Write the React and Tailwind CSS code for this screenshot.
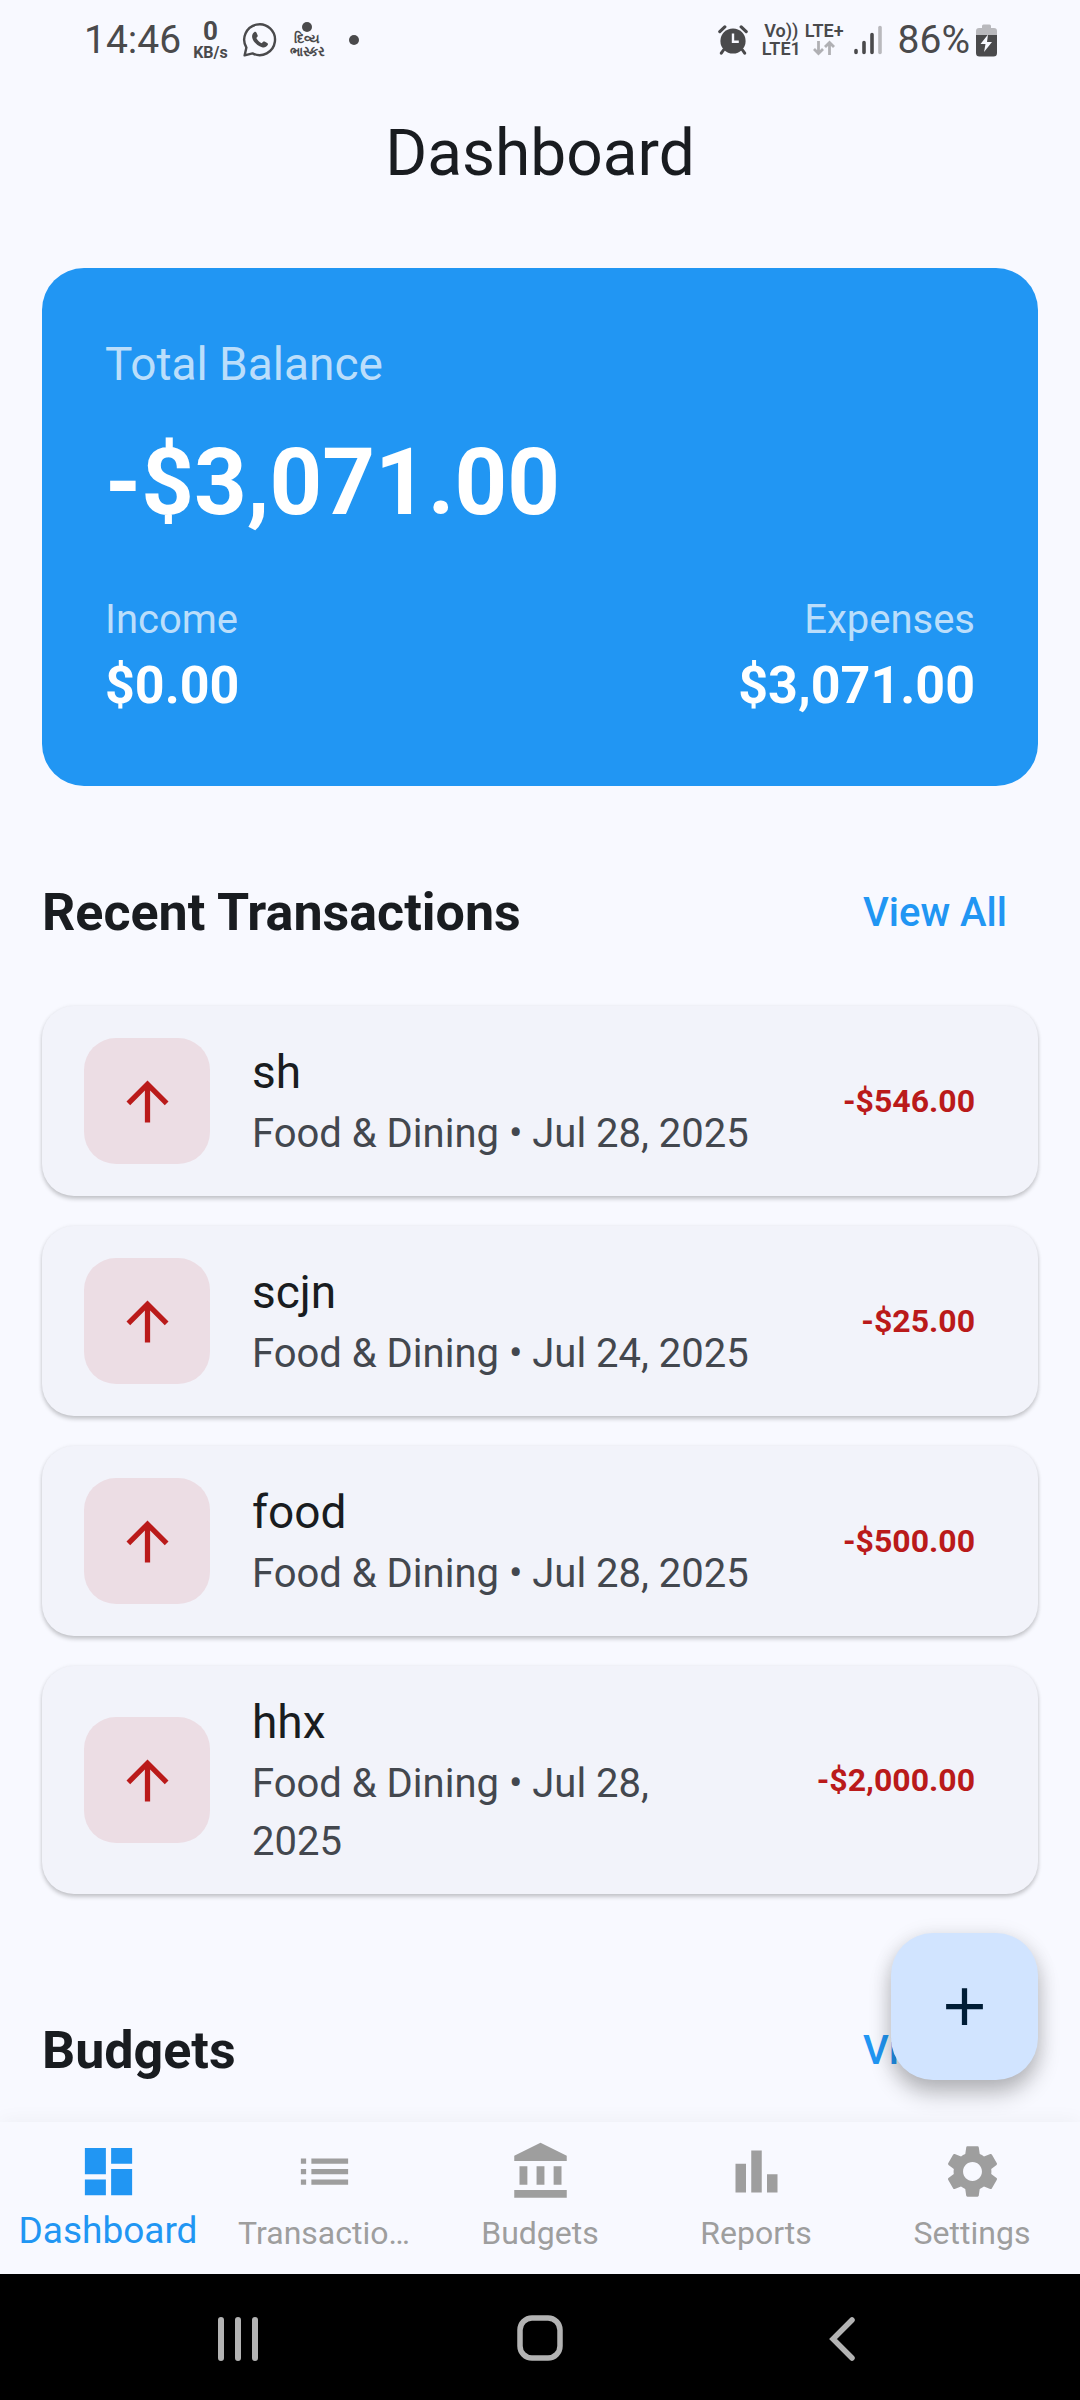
import React from "react";
import {
  MdDashboard,
  MdList,
  MdAccountBalance,
  MdBarChart,
  MdSettings,
  MdArrowUpward,
  MdAdd,
} from "react-icons/md";

const transactions = [
  { title: "sh", detail: "Food & Dining • Jul 28, 2025", amount: "-$546.00" },
  { title: "scjn", detail: "Food & Dining • Jul 24, 2025", amount: "-$25.00" },
  { title: "food", detail: "Food & Dining • Jul 28, 2025", amount: "-$500.00" },
  { title: "hhx", detail: "Food & Dining • Jul 28, 2025", amount: "-$2,000.00" },
];

const tabs = [
  { name: "Dashboard", label: "Dashboard", Icon: MdDashboard, active: true },
  { name: "Transactions", label: "Transactio…", Icon: MdList },
  { name: "Budgets", label: "Budgets", Icon: MdAccountBalance },
  { name: "Reports", label: "Reports", Icon: MdBarChart },
  { name: "Settings", label: "Settings", Icon: MdSettings },
];

function WhatsAppIcon() {
  return (
    <svg viewBox="0 0 36 36" className="size-9" fill="none" aria-label="WhatsApp">
      <path
        d="M2.6 33.4 4.4 25.6A15.4 15.4 0 1 1 10.6 31.4Z"
        stroke="#4a4a4c"
        strokeWidth="2.4"
        strokeLinejoin="round"
      />
      <path
        d="M12.2 10.2c.8-.6 1.9-.4 2.3.5l1.1 2.6c.3.7.1 1.3-.4 1.8l-.9 1c1.1 2.2 2.9 4 5.3 5.1l1.3-1.3c.5-.5 1.1-.6 1.7-.3l2.6 1.3c.8.4 1 1.3.5 2.1-1.2 2-3.4 2.9-5.7 2.2-4.7-1.5-8.4-4.9-9.7-9.3-.6-2.2.1-4.5 1.900-5.700Z"
        fill="#4a4a4c"
      />
    </svg>
  );
}

function AlarmIcon() {
  return (
    <svg viewBox="0 0 30 30" className="size-[30px]" fill="none" aria-label="Alarm">
      <circle cx="15" cy="16" r="12.6" fill="#4a4a4c" />
      <path d="M1.8 6.6 6.8 1.9M28.2 6.6 23.2 1.9" stroke="#4a4a4c" strokeWidth="3.2" strokeLinecap="round" />
      <path d="M5.5 25 3.3 28.2M24.5 25l2.2 3.2" stroke="#4a4a4c" strokeWidth="3" strokeLinecap="round" />
      <path d="M15 8.5V16.8h5.8" stroke="#f8f9ff" strokeWidth="2.4" />
    </svg>
  );
}

function SignalIcon() {
  return (
    <svg viewBox="0 0 28 30" className="h-[30px] w-7" strokeWidth="3.6" strokeLinecap="round" stroke="#4a4a4c" aria-label="Signal">
      <path d="M2 25.5v2M10 17.5v10M18 9.5v18" />
      <path d="M26 2.5v25" stroke="#b9b9bd" />
    </svg>
  );
}

function BatteryIcon() {
  return (
    <svg viewBox="0 0 21 33" className="h-[33px] w-[21px]" aria-label="Battery charging">
      <path d="M6 4V2a1.5 1.5 0 0 1 1.5-1.5h6A1.5 1.5 0 0 1 15 2v2h3a3 3 0 0 1 3 3v5H0V7a3 3 0 0 1 3-3Z" fill="#b9b9bd" />
      <path d="M0 11h21v18a3.5 3.5 0 0 1-3.5 3.5h-14A3.5 3.5 0 0 1 0 29Z" fill="#4a4a4c" />
      <path d="M12 10.5 4.5 20h5L8 28l8-10h-5Z" fill="#f8f9ff" />
    </svg>
  );
}

function StatusBar() {
  return (
    <div className="flex h-20 items-center justify-between pr-[83px] pl-[84px] text-[#4a4a4c]">
      <div className="flex items-center">
        <span className="text-[39px] leading-10">14:46</span>
        <span className="ml-3 flex flex-col items-center font-bold">
          <span className="text-[26px] leading-[26px]">0</span>
          <span className="text-base leading-[18px]">KB/s</span>
        </span>
        <span className="ml-3.5">
          <WhatsAppIcon />
        </span>
        <span className="ml-3 flex flex-col items-center text-[13px] leading-[13px] font-bold">
          <span className="size-2.5 rounded-full bg-[#4a4a4c]" />
          <span>દિવ્ય</span>
          <span>ભાસ્કર</span>
        </span>
        <span className="ml-6 size-2.5 rounded-full bg-[#4a4a4c]" />
      </div>
      <div className="flex items-center">
        <AlarmIcon />
        <div className="ml-3.5 grid grid-cols-[auto_auto] justify-items-center gap-x-1 text-[18px] leading-[18px] font-semibold">
          <span>Vo))</span>
          <span>LTE+</span>
          <span>LTE1</span>
          <svg viewBox="0 0 24 16" className="h-4 w-6" fill="none" stroke="#b0b0b4" strokeWidth="2.8" aria-label="Data">
            <path d="M6.5 1v12M2 9l4.5 4.5L11 9M17.5 15V3M13 7l4.5-4.5L22 7" />
          </svg>
        </div>
        <span className="ml-2.5">
          <SignalIcon />
        </span>
        <span className="ml-4 text-[39px] leading-10">86%</span>
        <span className="ml-1.5">
          <BatteryIcon />
        </span>
      </div>
    </div>
  );
}

function BalanceCard() {
  return (
    <section className="rounded-[42px] bg-[#2196f3] p-[63px] text-white">
      <p className="text-[46px] leading-[66px] text-[#bbdefb]">Total Balance</p>
      <p className="mt-5 text-[92px] leading-[132px] font-bold">-$3,071.00</p>
      <div className="mt-[42px] flex justify-between">
        <div>
          <p className="text-[40px] leading-[58px] text-[#bbdefb]">Income</p>
          <p className="text-[52px] leading-[74px] font-bold">$0.00</p>
        </div>
        <div className="text-right">
          <p className="text-[40px] leading-[58px] text-[#bbdefb]">Expenses</p>
          <p className="text-[52px] leading-[74px] font-bold">$3,071.00</p>
        </div>
      </div>
    </section>
  );
}

function SectionHeader({ title }) {
  return (
    <div className="mt-16 flex h-[126px] items-center justify-between">
      <h2 className="text-[52px] leading-[74px] font-bold">{title}</h2>
      <button type="button" className="px-[31px] text-[40px] leading-[58px] font-medium text-[#2196f3]">
        View All
      </button>
    </div>
  );
}

function TransactionCard({ title, detail, amount }) {
  return (
    <li className="flex min-h-[190px] items-center rounded-[32px] bg-[#f2f3fa] py-[23px] pr-[63px] pl-[42px] shadow-[0_3px_4px_rgba(0,0,0,0.2),0_0_4px_rgba(0,0,0,0.06)]">
      <div className="flex size-[126px] shrink-0 items-center justify-center rounded-[32px] bg-[#ecdde4] text-[#ba1a1a]">
        <MdArrowUpward className="size-[63px]" />
      </div>
      <div className="ml-[42px] min-w-0 flex-1">
        <p className="text-[46px] leading-[66px]">{title}</p>
        <p className="text-[40px] leading-[58px] text-[#43474e]">{detail}</p>
      </div>
      <p className="ml-20 text-[32px] leading-[46px] font-bold text-[#ba1a1a]">{amount}</p>
    </li>
  );
}

function BottomNav() {
  return (
    <nav className="grid h-[152px] grid-cols-5 bg-[#f8f9ff] shadow-[0_0_20px_rgba(0,0,0,0.05)]">
      {tabs.map(({ name, label, Icon, active }) => (
        <button
          key={name}
          type="button"
          aria-label={name}
          className={
            active
              ? "flex min-w-0 flex-col items-center pt-[18px] text-[#2196f3]"
              : "flex min-w-0 flex-col items-center pt-[18px] text-[#9e9e9e]"
          }
        >
          <Icon className="size-[63px] shrink-0" />
          <span className={active ? "text-[37px] leading-[56px]" : "mt-1.5 text-[32px] leading-[48px]"}>
            {label}
          </span>
        </button>
      ))}
    </nav>
  );
}

function SystemNav() {
  return (
    <div className="grid h-[126px] grid-cols-3 bg-black px-[87px]">
      <button type="button" aria-label="Recents" className="flex items-center justify-center">
        <svg viewBox="0 0 48 48" className="size-12" stroke="#b3b3b3" strokeWidth="6" strokeLinecap="round">
          <path d="M7 7v38M24 7v38M41 7v38" />
        </svg>
      </button>
      <button type="button" aria-label="Home" className="flex items-center justify-center">
        <svg viewBox="0 0 48 48" className="size-12" fill="none" stroke="#b3b3b3" strokeWidth="5.5">
          <rect x="4" y="5" width="40" height="40" rx="12" />
        </svg>
      </button>
      <button type="button" aria-label="Back" className="flex items-center justify-center">
        <svg viewBox="0 0 48 48" className="size-12" fill="none" stroke="#b3b3b3" strokeWidth="5.5" strokeLinecap="round">
          <path d="M34 7 15 26l19 19" />
        </svg>
      </button>
    </div>
  );
}

export default function App() {
  return (
    <div className="flex min-h-screen flex-col bg-[#f8f9ff] font-['Roboto',sans-serif] text-[#191c20]">
      <StatusBar />
      <header className="flex h-[147px] items-center justify-center">
        <h1 className="text-[64px] leading-[80px]">Dashboard</h1>
      </header>
      <main className="flex-1 px-[42px] pt-[41px]">
        <BalanceCard />
        <SectionHeader title="Recent Transactions" />
        <ul className="mt-[30px] mb-[94px] flex flex-col gap-[30px]">
          {transactions.map((t) => (
            <TransactionCard key={t.title} {...t} />
          ))}
        </ul>
        <SectionHeader title="Budgets" />
      </main>
      <div className="sticky bottom-0">
        <button
          type="button"
          aria-label="Add transaction"
          className="absolute right-[42px] bottom-full mb-[42px] flex size-[147px] items-center justify-center rounded-[42px] bg-[#d1e4ff] text-[#001d36] shadow-[0_14px_22px_rgba(0,0,0,0.24),0_2px_20px_rgba(0,0,0,0.1)]"
        >
          <MdAdd className="size-[63px]" />
        </button>
        <BottomNav />
        <SystemNav />
      </div>
    </div>
  );
}
